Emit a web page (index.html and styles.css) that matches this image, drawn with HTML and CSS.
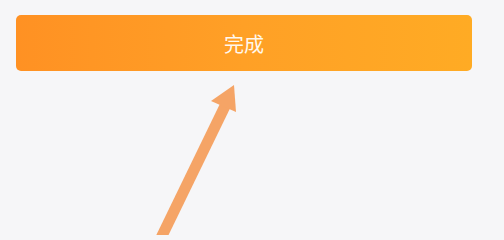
FILE: index.html
```html
<!DOCTYPE html>
<html lang="zh">
<head>
<meta charset="utf-8">
<link rel="stylesheet" href="styles.css">
</head>
<body>
<div class="page">
  <button class="done-btn">完成</button>
</div>
<svg class="arrow" width="504" height="235" viewBox="0 0 504 235">
  <line x1="160" y1="240" x2="226" y2="104" stroke="#F5A466" stroke-width="11"/>
  <polygon points="234,85 211,101 236,112" fill="#F5A466"/>
</svg>
</body>
</html>
```
FILE: styles.css
```css
html, body {
  margin: 0;
  padding: 0;
  background: #f6f6f8;
  width: 504px;
  height: 235px;
  overflow: hidden;
}
.page {
  padding: 15px 32px 0 16px;
}
.done-btn {
  display: block;
  width: 100%;
  height: 56px;
  border: none;
  border-radius: 5px;
  background: linear-gradient(90deg, #ff9123 0%, #ffa026 50%, #ffab24 100%);
  color: #fff8ee;
  font-family: "Noto Sans CJK SC", "Noto Sans", sans-serif;
  font-size: 20px;
  padding: 0;
  letter-spacing: 0;
}
.arrow {
  position: absolute;
  left: 0;
  top: 0;
}
```
